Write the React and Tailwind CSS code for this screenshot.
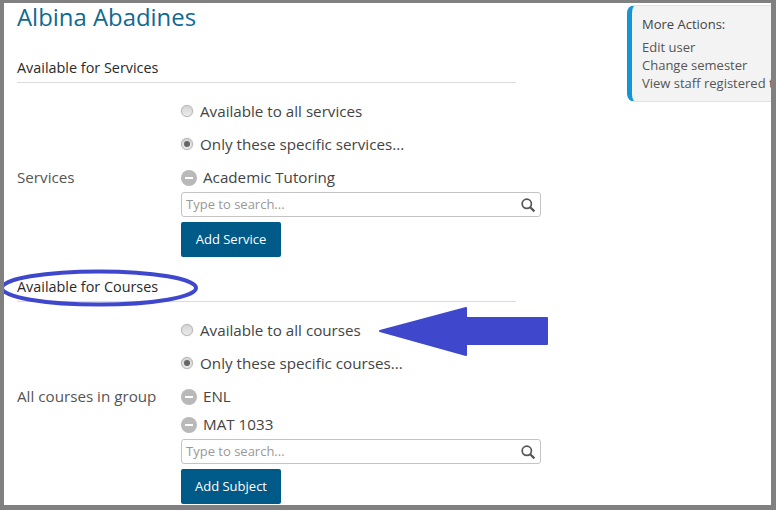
import React from 'react';

const Radio = ({ checked }) => (
  <span className="-mt-[2px] -ml-[1px] mr-[1px] w-[12px] h-[12px] rounded-full bg-gradient-to-b from-[#d4d4d4] to-[#ececec] border border-[#b5b5b5] shadow-[0_0_1px_#aaa] flex items-center justify-center shrink-0">
    {checked && <span className="w-[6px] h-[6px] rounded-full bg-[#666]" />}
  </span>
);

const RadioRow = ({ checked, label }) => (
  <div className="ml-[164px] h-[33px] flex items-center gap-[6px] pl-[1px] text-[15.2px] text-[#444]">
    <Radio checked={checked} />
    <span>{label}</span>
  </div>
);

const Chip = ({ label }) => (
  <div className="h-[28px] flex items-center gap-[6px] text-[15.2px] text-[#444]">
    <span className="w-[16px] h-[16px] rounded-full bg-[#b9b9b9] flex items-center justify-center">
      <span className="w-[8px] h-[2px] bg-white" />
    </span>
    <span className="-mt-[2px]">{label}</span>
  </div>
);

const SearchBox = () => (
  <div className="w-[360px] h-[25px] border border-[#c4c4c4] rounded-[3px] flex items-center justify-between pl-[4px] pr-[4px] bg-white">
    <span className="text-[13px] text-[#999]">Type to search...</span>
    <svg width="16" height="16" viewBox="0 0 16 16" fill="none" stroke="#555" strokeWidth="1.7">
      <circle cx="6.8" cy="6.8" r="4.6" />
      <path d="M10.2 10.2 L14.4 14.4" strokeWidth="2.2" />
    </svg>
  </div>
);

const AddButton = ({ label }) => (
  <button className="block mt-[5px] w-[100px] h-[35px] rounded-[2px] bg-[#005a87] text-white text-[13px] font-medium">
    {label}
  </button>
);

const SectionTitle = ({ label }) => (
  <div className="w-[499px] h-[28px] border-b border-[#dcdcdc] text-[14.4px] font-medium text-[#2a2a2a] leading-[26px]">
    {label}
  </div>
);

const App = () => {
  return (
    <div className="w-[776px] h-[510px] bg-[#808080] pt-[3px] pl-[4px] pr-[5px] pb-[5px] overflow-hidden" style={{ fontFamily: '"Open Sans", sans-serif' }}>
      <div className="relative w-full h-full bg-white overflow-hidden flex pl-[13px]">
        <div className="w-[610px] shrink-0">
          <h1 className="h-[52px] text-[23.9px] leading-[28px] text-[#0e6a94]">Albina Abadines</h1>
          <SectionTitle label="Available for Services" />
          <div className="h-[12px]" />
          <RadioRow label="Available to all services" />
          <RadioRow checked label="Only these specific services..." />
          <div className="flex mt-[3px]">
            <div className="w-[164px] h-[26px] flex items-center text-[15.2px] text-[#555]">Services</div>
            <div>
              <Chip label="Academic Tutoring" />
              <SearchBox />
              <AddButton label="Add Service" />
            </div>
          </div>
          <div className="h-[17px]" />
          <SectionTitle label="Available for Courses" />
          <div className="h-[12px]" />
          <RadioRow label="Available to all courses" />
          <RadioRow checked label="Only these specific courses..." />
          <div className="flex mt-[3px]">
            <div className="w-[164px] h-[26px] flex items-center text-[15.2px] text-[#555]">All courses in group</div>
            <div>
              <Chip label="ENL" />
              <Chip label="MAT 1033" />
              <SearchBox />
              <AddButton label="Add Subject" />
            </div>
          </div>
        </div>

        <div className="mt-[2px] h-[97px] w-[200px] shrink-0 bg-[#f3f3f3] border-l-[5px] border-l-[#1296d6] border-y border-y-[#e2e2e2] rounded-l-[8px] pl-[10px] pt-[9px] text-[13px] leading-[18px] text-[#555] whitespace-nowrap">
          <div className="font-medium text-[#444] mb-[5px]">More Actions:</div>
          <div>Edit user</div>
          <div>Change semester</div>
          <div>View staff registered to this user</div>
        </div>

        {/* hand drawn annotations over the page */}
        <svg className="absolute left-0 top-0 pointer-events-none" width="767" height="502">
          <ellipse cx="95" cy="285" rx="97" ry="16.5" fill="none" stroke="#3f48cc" strokeWidth="4" />
          <path d="M376 328 L462 305 L462 315 L543 315 L543 341 L462 341 L462 352 Z" fill="#3f48cc" stroke="#3f48cc" strokeWidth="2" strokeLinejoin="round" />
        </svg>
      </div>
    </div>
  );
};

export default App;
